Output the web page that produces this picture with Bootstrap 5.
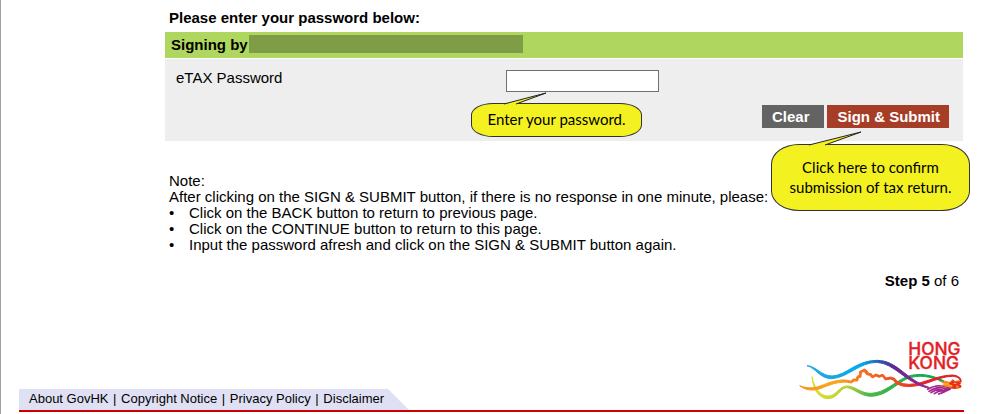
<!DOCTYPE html>
<html lang="en">
<head>
<meta charset="utf-8">
<meta name="viewport" content="width=device-width, initial-scale=1">
<title>eTAX – Sign and submit</title>
<link href="https://cdn.jsdelivr.net/npm/bootstrap@5.3.0/dist/css/bootstrap.min.css" rel="stylesheet">
<style>
  body { font-family: "Liberation Sans", Arial, sans-serif; font-size: 15px; line-height: 16px; color: #000; background: #fff; border-left: 1px solid #a0a0a0; min-height: 100vh; }
  .page-main { margin-left: 164px; margin-right: 24px; }
  .page-title { font-size: 15px; line-height: 16px; padding: 10px 4px 6px; }
  .sign-bar { background: #afd75f; height: 26px; padding: 0 6px; margin-bottom: 1px; }
  .redacted { background: #7f9c47; width: 274px; height: 18px; margin: 0 0 3px 1px; }
  .sign-panel { background: #eee; padding: 11px 14px 13px 11px; }
  .pw-col { width: 330px; }
  .pw-input { width: 153px; height: 22px; border: 1px solid #707070; border-radius: 0; padding: 1px 4px; }
  .action-row { gap: 3px; margin-top: 13px; }
  .sign-panel .btn { font-size: 15px; font-weight: 700; line-height: 16px; color: #fff; border: 0; border-radius: 0; padding: 4px 11px 3px; }
  .sign-panel .btn-clear { background: #636363; padding-left: 10px; padding-right: 14px; }
  .sign-panel .btn-sign { background: #a63e27; padding-right: 9px; }
  .callout { position: absolute; z-index: 2; background: #f4f121; border: 1px solid #333; font-family: Lato, sans-serif; font-size: 15px; line-height: 20px; text-align: center; white-space: nowrap; }
  .callout svg { position: absolute; overflow: visible; }
  .callout-pw { left: -35px; top: 33px; width: 171px; padding: 5px 0 7px; border-radius: 22px / 12px; }
  .callout-pw svg { left: 32px; top: -12px; }
  .callout-sign { right: -21px; top: 39px; width: 199px; padding: 12px 0 13px; border-radius: 28px / 20px; }
  .callout-sign svg { left: 37px; top: -14px; }
  .note { padding: 32px 4px 0; }
  .note li { padding-left: 20px; position: relative; }
  .note li::before { content: "•"; position: absolute; left: 0; }
  .step { padding: 20px 4px 0; }
  .page-foot { margin-left: 18px; margin-right: 23px; border-bottom: 2px solid #c00; margin-top: 52px; height: 71px; }
  .foot-links { background: #dfe0f4; font-size: 13px; line-height: 16px; padding: 2px 24px 3px 10px; clip-path: polygon(0 0, calc(100% - 21px) 0, 100% 100%, 0 100%); white-space: pre; }
  .foot-links a { color: #000; text-decoration: none; margin-right: 1px; }
  .foot-links a + a { margin-left: 1px; }
  .brand-mark { width: 165px; height: 71px; }
</style>
<script src="https://cdn.jsdelivr.net/npm/bootstrap@5.3.0/dist/js/bootstrap.bundle.min.js"></script>
</head>
<body>
<main class="page-main">
  <h1 class="page-title fw-bold m-0">Please enter your password below:</h1>
  <form>
    <div class="sign-bar d-flex align-items-center fw-bold"><span>Signing by</span><span class="redacted"></span></div>
    <div class="sign-panel">
      <div class="d-flex align-items-start">
        <label class="pw-col" for="pw">eTAX Password</label>
        <div class="position-relative">
          <input class="pw-input d-block" type="password" id="pw">
          <div class="callout callout-pw">
            <svg width="44" height="13" viewBox="0 0 44 13"><path d="M0 12 42 1 12 12V14H0Z" fill="#f4f121"/><path d="M0 12 42 1 12 12" fill="none" stroke="#222"/></svg>
            Enter your password.
          </div>
        </div>
      </div>
      <div class="d-flex justify-content-end">
        <div class="d-flex position-relative action-row">
          <button type="reset" class="btn btn-clear">Clear</button>
          <button type="button" class="btn btn-sign">Sign &amp; Submit</button>
          <div class="callout callout-sign">
            <svg width="54" height="15" viewBox="0 0 54 15"><path d="M0 14 52 1 16 14V16H0Z" fill="#f4f121"/><path d="M0 14 52 1 16 14" fill="none" stroke="#222"/></svg>
            Click here to confirm<br>submission of tax return.
          </div>
        </div>
      </div>
    </div>
  </form>
  <section class="note">
    <div>Note:</div>
    <div>After clicking on the SIGN &amp; SUBMIT button, if there is no response in one minute, please:</div>
    <ul class="list-unstyled m-0">
      <li>Click on the BACK button to return to previous page.</li>
      <li>Click on the CONTINUE button to return to this page.</li>
      <li>Input the password afresh and click on the SIGN &amp; SUBMIT button again.</li>
    </ul>
  </section>
  <div class="step text-end"><b>Step 5</b> of 6</div>
</main>
<footer class="page-foot d-flex justify-content-between align-items-end">
  <nav class="foot-links" aria-label="Footer"><a href="#">About GovHK</a> | <a href="#">Copyright Notice</a> | <a href="#">Privacy Policy</a> | <a href="#">Disclaimer</a></nav>
  <svg class="brand-mark" viewBox="25 10 495 213" role="img" aria-label="Hong Kong">
    <defs>
      <linearGradient id="gBlue" gradientUnits="userSpaceOnUse" x1="50" x2="415" y1="0" y2="0"><stop offset="0" stop-color="#2ba5df"/><stop offset=".45" stop-color="#00a9ec"/><stop offset=".6" stop-color="#2458ae"/><stop offset=".7" stop-color="#5b2b91"/><stop offset="1" stop-color="#a0228f"/></linearGradient>
      <linearGradient id="gGreen" gradientUnits="userSpaceOnUse" x1="64" x2="460" y1="0" y2="0"><stop offset="0" stop-color="#dde02a"/><stop offset=".27" stop-color="#b5d334"/><stop offset=".42" stop-color="#4fb748"/><stop offset="1" stop-color="#00a651"/></linearGradient>
      <linearGradient id="gRed" gradientUnits="userSpaceOnUse" x1="27" x2="400" y1="0" y2="0"><stop offset="0" stop-color="#f7941d"/><stop offset=".3" stop-color="#faa61a"/><stop offset=".5" stop-color="#f36f21"/><stop offset=".78" stop-color="#ed4c23"/><stop offset="1" stop-color="#e31b23"/></linearGradient>
    </defs>
    <g font-family="Inter, sans-serif" font-weight="500" font-size="52" fill="#e31e26" stroke="#e31e26"><text x="353" y="59">HONG</text><text x="353" y="101">KONG</text></g>
    <path fill="url(#gGreen)" stroke="url(#gGreen)" stroke-width="3" d="M64 123C70 150 84 180 111 181 136 182 142 155 166 151 191 149 210 174 241 173 282 172 312 138 348 123 382 110 425 117 460 136L458 139C418 121 383 116 350 129 316 144 288 181 241 182 208 181 188 157 167 156 147 158 142 189 111 189 80 187 66 154 64 123Z"/>
    <path fill="url(#gRed)" stroke="url(#gRed)" stroke-width="3" d="M27 150C48 158 67 159 88 151 114 142 145 126 180 136L188 130 197 130 199 122 206 119 207 107 222 100 231 107 233 113 242 114 246 121 255 115 266 119 277 116 286 127 299 124 312 128 321 138 337 144C386 155 430 118 486 118 506 120 513 129 511 139L508 138C509 129 501 123 486 122 440 121 393 161 335 151L316 144 309 134 299 130 284 133 275 122 265 125 256 121 245 127 237 119 228 117 220 107 212 111 211 124 203 127 201 136 191 136 182 142C150 133 114 149 91 158 68 167 44 164 27 150Z"/>
    <path fill="url(#gBlue)" stroke="url(#gBlue)" stroke-width="3" d="M49 90C77 91 90 120 124 121 169 119 194 75 258 74 321 74 346 133 415 155L414 158C344 142 313 83 258 80 204 81 173 126 123 129 85 128 77 97 49 90Z"/>
    <g fill="none" stroke="#a3278f" stroke-width="5" stroke-linecap="round"><path d="M411 161Q437 145 465 153L482 155M415 167Q438 151 462 158L480 158M421 171Q440 157 459 164L478 160M431 174Q447 162 467 166L478 161M444 175Q459 171 480 157"/></g>
    <path fill="#f58220" d="M444 136 464 138 456 133 477 139 486 130 492 136 504 134 513 141 508 147 513 153 502 160 483 159 474 154 456 156 466 150 448 150 461 145Z"/>
    <path fill="#e52b24" d="M474 144 489 132 493 139 506 137 511 143 504 146 512 149 511 156 497 155 494 160 480 157 488 151Z"/>
    <path d="M457 145 475 145M472 151 484 149M489 143 497 143M496 151 503 152" stroke="#ffc52c" stroke-width="3"/>
  </svg>
</footer>
</body>
</html>
